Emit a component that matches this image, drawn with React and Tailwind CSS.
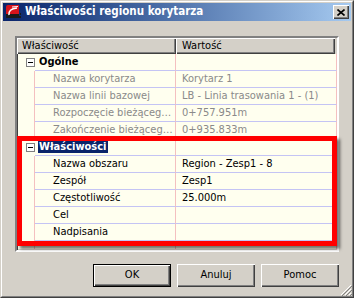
const FONT = "font-['DejaVu_Sans_Condensed','DejaVu_Sans',sans-serif]";

function MinusBox() {
  return (
    <div className="w-[9px] h-[9px] border border-[#808080] bg-white flex items-center justify-center">
      <div className="w-[5px] h-px bg-black" />
    </div>
  );
}

function CategoryRow({ label, selected }) {
  return (
    <div className="flex h-[17px]">
      <div className="w-[18px] flex items-center pl-[9px]">
        <MinusBox />
      </div>
      <div className="w-[141px] border-b border-r border-b-[#c4c4f4] border-r-[#f4c0c0] flex items-center pl-[3px]">
        <span
          className={
            "font-bold leading-[12px] px-px " +
            (selected ? "bg-[#0a246a] text-white" : "text-black")
          }
        >
          {label}
        </span>
      </div>
      <div className="flex-1 border-b border-r border-b-[#c4c4f4] border-r-[#f4c0c0]" />
    </div>
  );
}

function PropRow({ name, value, disabled }) {
  const color = disabled ? "text-[#8a8a8a]" : "text-black";
  return (
    <div className="flex h-[17px]">
      <div className="w-[18px] border-r border-r-[#f4c0c0]" />
      <div
        className={
          "w-[141px] border-b border-r border-b-[#c4c4f4] border-r-[#f4c0c0] flex items-center pl-[18px] whitespace-nowrap overflow-hidden " +
          color
        }
      >
        {name}
      </div>
      <div
        className={
          "flex-1 border-b border-r border-b-[#c4c4f4] border-r-[#f4c0c0] flex items-center pl-[6px] whitespace-nowrap overflow-hidden " +
          color
        }
      >
        {value}
      </div>
    </div>
  );
}

function Button({ children, isDefault }) {
  return (
    <div
      className={
        "w-[78px] h-[23px] flex items-center justify-center bg-[#d4d0c8] text-black " +
        (isDefault
          ? "border border-black shadow-[inset_1px_1px_0_#ffffff,inset_-1px_-1px_0_#404040,inset_-2px_-2px_0_#808080]"
          : "shadow-[inset_1px_1px_0_#ffffff,inset_-1px_-1px_0_#404040,inset_-2px_-2px_0_#808080]")
      }
    >
      {children}
    </div>
  );
}

function TitleIcon() {
  return (
    <svg width="16" height="16" viewBox="0 0 16 16">
      <path d="M1 3 Q1 1 3 1 L14 1 L14 10 L1 10 Z" fill="#d8141c" />
      <rect x="1" y="10" width="13" height="4" fill="#1a1a1a" />
      <path d="M4 11 Q3 5 12 4" stroke="#ffffff" strokeWidth="1.6" fill="none" />
      <path d="M7 3 L13 2.5" stroke="#ffffff" strokeWidth="1" fill="none" />
      <rect x="14" y="12" width="2" height="2" fill="#1a1a1a" />
      <rect x="15" y="9" width="1" height="2" fill="#1a1a1a" />
    </svg>
  );
}

export default function App() {
  return (
    <div className={"w-[354px] h-[298px] text-[11px] " + FONT}>
      <div className="w-full h-full border border-t-[#d4d0c8] border-l-[#d4d0c8] border-r-[#404040] border-b-[#404040] bg-[#d4d0c8]">
        <div className="w-full h-full border border-t-white border-l-white border-r-[#808080] border-b-[#808080] p-px flex flex-col relative">
          {/* Title bar */}
          <div className="h-[18px] flex items-center bg-gradient-to-r from-[#0a246a] to-[#a6caf0] pl-[2px] pr-[2px]">
            <TitleIcon />
            <span className="ml-[4px] text-white font-bold text-[11.5px] leading-none">
              Właściwości regionu korytarza
            </span>
            <div className="ml-auto w-[16px] h-[14px] bg-[#d4d0c8] shadow-[inset_1px_1px_0_#ffffff,inset_-1px_-1px_0_#404040,inset_-2px_-2px_0_#808080] flex items-center justify-center">
              <svg width="8" height="7" viewBox="0 0 8 7">
                <path d="M0.5 0.5 L7.5 6.5 M7.5 0.5 L0.5 6.5" stroke="#000" strokeWidth="1.6" />
              </svg>
            </div>
          </div>

          {/* Content */}
          <div className="flex-1 flex flex-col px-[12px] pt-[15px] pb-[8px]">
            {/* Grid */}
            <div className="relative h-[216px] border-2 border-t-[#808080] border-l-[#808080] border-r-white border-b-white">
              <div className="w-full h-full border-0 shadow-[inset_1px_1px_0_#404040,inset_-1px_-1px_0_#d4d0c8] bg-[#ffffef] flex flex-col">
                {/* Header */}
                <div className="flex h-[16px] bg-[#d4d0c8]">
                  <div className="w-[159px] flex items-center pl-[5px] text-black shadow-[inset_1px_1px_0_#ffffff,inset_-1px_-1px_0_#404040,inset_-2px_-2px_0_#808080]">
                    Właściwość
                  </div>
                  <div className="w-[159px] flex items-center pl-[6px] text-black shadow-[inset_1px_1px_0_#ffffff,inset_-1px_-1px_0_#404040,inset_-2px_-2px_0_#808080]">
                    Wartość
                  </div>
                  <div className="flex-1" />
                </div>
                <CategoryRow label="Ogólne" />
                <PropRow name="Nazwa korytarza" value="Korytarz 1" disabled />
                <PropRow name="Nazwa linii bazowej" value="LB - Linia trasowania 1 - (1)" disabled />
                <PropRow name="Rozpoczęcie bieżąceg…" value="0+757.951m" disabled />
                <PropRow name="Zakończenie bieżąceg…" value="0+935.833m" disabled />
                <CategoryRow label="Właściwości" selected />
                <PropRow name="Nazwa obszaru" value="Region - Zesp1 - 8" />
                <PropRow name="Zespół" value="Zesp1" />
                <PropRow name="Częstotliwość" value="25.000m" />
                <PropRow name="Cel" value="" />
                <PropRow name="Nadpisania" value="" />
                <div className="flex flex-1">
                  <div className="w-[18px] border-r border-r-[#f4c0c0]" />
                  <div className="w-[141px] border-r border-r-[#f4c0c0]" />
                  <div className="flex-1 border-r border-r-[#f4c0c0]" />
                </div>
              </div>
              {/* Red annotation box */}
              <div className="absolute left-0 top-[98px] w-[320px] h-[110px] border-[5px] border-[#ff0000] shadow-[3px_3px_3px_rgba(0,0,0,0.55)]" />
            </div>

            {/* Buttons */}
            <div className="flex justify-end gap-[6px] mt-[12px]">
              <Button isDefault>OK</Button>
              <Button>Anuluj</Button>
              <Button>Pomoc</Button>
            </div>
          </div>

          {/* Resize grip */}
          <svg className="absolute right-0 bottom-0" width="12" height="12" viewBox="0 0 12 12">
            <path d="M11 1 L1 11 M11 5 L5 11 M11 9 L9 11" stroke="#ffffff" strokeWidth="1" />
            <path d="M12 1 L1 12 M12 5 L5 12 M12 9 L9 12" stroke="#808080" strokeWidth="1" transform="translate(0.5,0.5)" />
          </svg>
        </div>
      </div>
    </div>
  );
}
